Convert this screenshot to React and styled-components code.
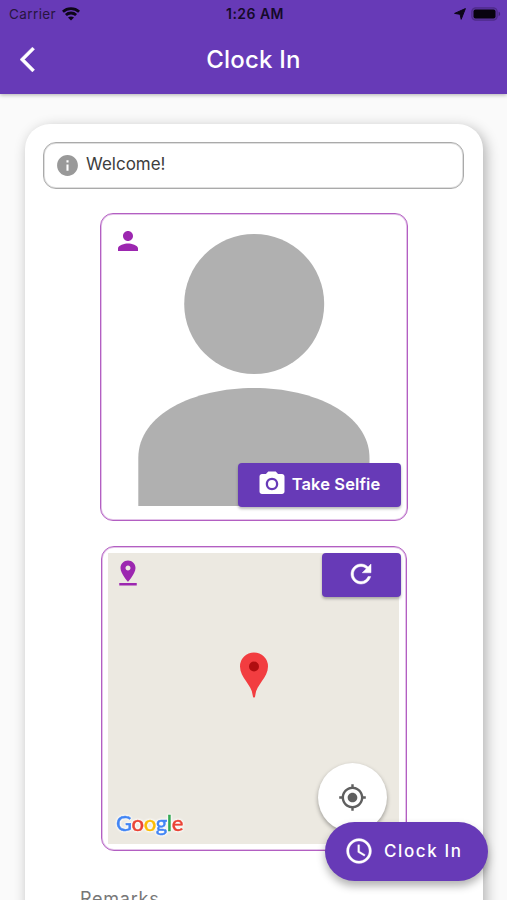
import React from "react";
import styled, { createGlobalStyle } from "styled-components";

const purple = "#673ab7";
const accent = "#9c27b0";

const GlobalStyle = createGlobalStyle`
  * { box-sizing: border-box; }
  html, body { margin: 0; padding: 0; overflow: hidden; background: #fafafa; }
  body { font-family: Inter, Roboto, "Liberation Sans", sans-serif; }
  svg { display: block; flex: none; }
`;

const Screen = styled.div`
  position: relative;
  width: 507px;
  height: 900px;
  overflow: hidden;
  display: flex;
  flex-direction: column;
  background: #fafafa;
`;

const Header = styled.header`
  flex: none;
  height: 94px;
  background: ${purple};
  box-shadow: 0 1px 4px rgba(0, 0, 0, 0.3);
`;

const StatusBar = styled.div`
  display: grid;
  grid-template-columns: 1fr auto 1fr;
  align-items: center;
  height: 27px;
  padding: 0 6px 0 9px;
  color: #150a2a;
  font-size: 13.5px;
`;

const StatusGroup = styled.div`
  display: flex;
  align-items: center;
  gap: ${(p) => p.$gap}px;
  justify-content: ${(p) => (p.$end ? "flex-end" : "flex-start")};
`;

const Carrier = styled.span`
  letter-spacing: 0.4px;
  color: #28153f;
`;

const Time = styled.span`
  font-weight: 600;
  font-size: 14px;
  letter-spacing: 0.45px;
`;

const TitleBar = styled.div`
  display: grid;
  grid-template-columns: 60px 1fr 60px;
  align-items: center;
  height: 65px;
`;

const BackButton = styled.button`
  display: flex;
  padding: 0 0 0 20px;
  border: 0;
  background: none;
  color: #fff;
`;

const Title = styled.h1`
  margin: 0;
  text-align: center;
  font-size: 24px;
  font-weight: 500;
  letter-spacing: 0.2px;
  color: #fff;
`;

const Card = styled.main`
  flex: none;
  display: flex;
  flex-direction: column;
  align-items: center;
  width: 458px;
  height: 900px;
  margin: 30px 0 0 25px;
  padding-top: 18px;
  border-radius: 25px;
  background: #fff;
  box-shadow: 3px 4px 14px rgba(0, 0, 0, 0.3);
`;

const Notice = styled.div`
  display: flex;
  align-items: center;
  gap: 6px;
  width: 421px;
  height: 47px;
  margin-right: 1px;
  padding-left: 11px;
  border: 1px solid #aaa;
  border-radius: 13px;
  box-shadow: inset 0 0 0 1px rgba(150, 150, 150, 0.3);
  color: #999;
`;

const NoticeText = styled.span`
  margin-top: -3px;
  font-size: 17px;
  letter-spacing: 0;
  color: #3d3d3d;
`;

const Frame = styled.section`
  display: grid;
  width: ${(p) => p.$width}px;
  height: ${(p) => p.$height}px;
  margin-top: ${(p) => p.$gap}px;
  padding: 6px;
  border: 1px solid #b35fc2;
  border-radius: 13px;
  box-shadow: inset 0 0 0 1px rgba(156, 39, 176, 0.28);
  color: ${accent};
  > * { grid-area: 1 / 1; }
`;

const Corner = styled.div`
  z-index: 1;
  align-self: start;
  justify-self: start;
  margin: ${(p) => p.$inset};
`;

const MapArea = styled.div`
  display: grid;
  place-items: center;
  margin-right: 1px;
  background: #ece9e1;
  > * { grid-area: 1 / 1; }
`;

const ActionButton = styled.button`
  z-index: 1;
  align-self: ${(p) => p.$align};
  justify-self: end;
  display: flex;
  align-items: center;
  justify-content: center;
  gap: 5px;
  width: ${(p) => p.$width}px;
  height: 44px;
  margin: ${(p) => p.$margin};
  padding: 0 2px 2px 0;
  border: 0;
  border-radius: 4px;
  background: ${purple};
  box-shadow: 0 2px 3px rgba(0, 0, 0, 0.28);
  color: #fff;
  font: 600 16.5px Inter, sans-serif;
  letter-spacing: 0.1px;
`;

const LocateButton = styled.button`
  place-self: end;
  display: grid;
  place-items: center;
  width: 69px;
  height: 69px;
  margin: 0 12px 12px 0;
  padding: 0;
  border: 0;
  border-radius: 50%;
  background: #fff;
  color: #5f5f5f;
  box-shadow: 0 2px 4px rgba(0, 0, 0, 0.35);
`;

const Brand = styled.div`
  place-self: end start;
  margin: 0 0 7px 8px;
  font: 500 22px/28px Lato, sans-serif;
  letter-spacing: -0.4px;
  filter: drop-shadow(0 0 1px #fff) drop-shadow(0 0 1px #fff);
`;

const Letter = styled.span`
  color: ${(p) => p.$color};
  -webkit-text-stroke: 0.4px ${(p) => p.$color};
`;

const MarkerSlot = styled.div`
  padding-bottom: 47px;
`;

const Remarks = styled.label`
  align-self: flex-start;
  margin: 36px 0 0 55px;
  font-size: 18px;
  line-height: 24px;
  letter-spacing: 0.75px;
  color: #777;
`;

const Fab = styled.button`
  position: absolute;
  right: 19px;
  bottom: 19px;
  z-index: 2;
  display: flex;
  align-items: center;
  gap: 10px;
  width: 163px;
  height: 59px;
  padding: 0 0 1px 19px;
  border: 0;
  border-radius: 30px;
  background: ${purple};
  box-shadow: 0 5px 9px rgba(0, 0, 0, 0.3);
  color: #fff;
  font: 500 17px Inter, sans-serif;
  letter-spacing: 1.6px;
`;

const paths = {
  info: "M12 2C6.48 2 2 6.48 2 12s4.48 10 10 10 10-4.48 10-10S17.52 2 12 2zm1 15h-2v-6h2v6zm0-8h-2V7h2v2z",
  person: "M12 12c2.21 0 4-1.79 4-4s-1.79-4-4-4-4 1.79-4 4 1.79 4 4 4zm0 2c-2.67 0-8 1.34-8 4v2h16v-2c0-2.66-5.33-4-8-4z",
  pinDrop: "M18 8c0-3.31-2.69-6-6-6S6 4.69 6 8c0 4.5 6 11 6 11s6-6.5 6-11zm-8 0c0-1.1.9-2 2-2s2 .9 2 2-.89 2-2 2c-1.1 0-2-.9-2-2zM5 20v2h14v-2H5z",
  camera: "M12 8.8a3.2 3.2 0 1 0 0 6.4 3.2 3.2 0 0 0 0-6.4zM9 2L7.17 4H4c-1.1 0-2 .9-2 2v12c0 1.1.9 2 2 2h16c1.1 0 2-.9 2-2V6c0-1.1-.9-2-2-2h-3.17L15 2H9zm3 15c-2.76 0-5-2.24-5-5s2.24-5 5-5 5 2.24 5 5-2.24 5-5 5z",
  refresh: "M17.65 6.35C16.2 4.9 14.21 4 12 4c-4.42 0-7.99 3.58-7.99 8s3.57 8 7.99 8c3.73 0 6.84-2.55 7.73-6h-2.08c-.82 2.33-3.04 4-5.65 4-3.31 0-6-2.69-6-6s2.69-6 6-6c1.66 0 3.14.69 4.22 1.78L13 11h7V4l-2.35 2.35z",
  locate: "M12 8c-2.21 0-4 1.79-4 4s1.79 4 4 4 4-1.79 4-4-1.79-4-4-4zm8.94 3c-.46-4.17-3.77-7.48-7.94-7.94V1h-2v2.06C6.83 3.52 3.52 6.83 3.06 11H1v2h2.06c.46 4.17 3.77 7.48 7.94 7.94V23h2v-2.06c4.17-.46 7.48-3.77 7.94-7.94H23v-2h-2.06zM12 19c-3.87 0-7-3.13-7-7s3.13-7 7-7 7 3.13 7 7-3.13 7-7 7z",
  clock: "M11.99 2C6.47 2 2 6.48 2 12s4.47 10 9.99 10C17.52 22 22 17.52 22 12S17.52 2 11.99 2zM12 20c-4.42 0-8-3.58-8-8s3.58-8 8-8 8 3.58 8 8-3.58 8-8 8zm.5-13H11v6l5.25 3.15.75-1.23-4.5-2.67z",
};

const strokes = { refresh: 0.4, clock: 0.2 };

function Icon({ name, size = 30 }) {
  return (
    <svg
      width={size}
      height={size}
      viewBox="0 0 24 24"
      fill="currentColor"
      stroke="currentColor"
      strokeWidth={strokes[name] || 0}
      aria-hidden="true"
    >
      <path d={paths[name]} />
    </svg>
  );
}

const BackIcon = () => (
  <svg width="15" height="25" viewBox="0 2 12 20" fill="#fff" stroke="#fff" strokeWidth=".4">
    <path d="M11.67 3.87 9.9 2.1 0 12l9.9 9.9 1.77-1.77L3.54 12z" />
  </svg>
);

const WifiIcon = () => (
  <svg width="18" height="14" viewBox="0 0 18 14" fill="none" stroke="#0d0618" strokeWidth="2.8">
    <path d="M.9 4.7C5.4.5 12.6.5 17.1 4.7" />
    <path d="M3.9 8c2.9-2.7 7.3-2.7 10.2 0" />
    <path d="M9 13.5 6 10.6c1.7-1.5 4.3-1.5 6 0z" fill="#0d0618" stroke="none" />
  </svg>
);

const LocationArrow = () => (
  <svg width="12" height="12" viewBox="0 0 12 12" fill="#0d0618">
    <path d="M11.4.6 7.2 11.3 6.1 6.3.6 5.4z" stroke="#0d0618" strokeWidth="1" strokeLinejoin="round" />
  </svg>
);

const BatteryIcon = () => (
  <svg width="30" height="14" viewBox="0 0 30 14">
    <rect x=".8" y=".8" width="25.4" height="12.4" rx="4" fill="#5d35a2" stroke="#4e2b8b" strokeWidth="1.2" />
    <rect x="2.5" y="2.5" width="22" height="9" rx="2" fill="#08030f" />
    <path d="M27.6 4.8c2 .5 2 3.9 0 4.4z" fill="#44267a" />
  </svg>
);

const Silhouette = () => (
  <svg width="294" height="294" viewBox="107 220 294 294" fill="#b0b0b0">
    <circle cx="254.2" cy="304" r="70" />
    <path d="M138.3 506V458C138.3 414 194 388 254 388S369.5 414 369.5 458V506z" />
  </svg>
);

const Marker = () => (
  <svg width="30" height="46" viewBox="0 0 30 46">
    <path d="M15 45.5c-.9 0-1.1-.7-1.3-2.3C12.7 32.5 1 25.8 1 14.5a14 14 0 0 1 28 0C29 25.8 17.3 32.5 16.3 43.2c-.2 1.6-.4 2.3-1.3 2.3z" fill="#f23d40" />
    <circle cx="15" cy="14.5" r="5" fill="#b00d10" />
  </svg>
);

const brandLetters = [
  ["G", "#4285f4"],
  ["o", "#ea4335"],
  ["o", "#fbbc05"],
  ["g", "#4285f4"],
  ["l", "#34a853"],
  ["e", "#ea4335"],
];

export default function App() {
  return (
    <Screen>
      <GlobalStyle />
      <Header>
        <StatusBar>
          <StatusGroup $gap={6}>
            <Carrier>Carrier</Carrier>
            <WifiIcon />
          </StatusGroup>
          <Time>1:26 AM</Time>
          <StatusGroup $gap={5} $end>
            <LocationArrow />
            <BatteryIcon />
          </StatusGroup>
        </StatusBar>
        <TitleBar>
          <BackButton aria-label="Back">
            <BackIcon />
          </BackButton>
          <Title>Clock In</Title>
        </TitleBar>
      </Header>

      <Card>
        <Notice>
          <Icon name="info" size={25} />
          <NoticeText>Welcome!</NoticeText>
        </Notice>

        <Frame $width={308} $height={308} $gap={24}>
          <Silhouette />
          <Corner $inset="6px 0 0 6px">
            <Icon name="person" />
          </Corner>
          <ActionButton $align="end" $width={163} $margin="0 0 7px 0">
            <Icon name="camera" />
            Take Selfie
          </ActionButton>
        </Frame>

        <Frame $width={306} $height={305} $gap={25}>
          <MapArea>
            <MarkerSlot>
              <Marker />
            </MarkerSlot>
            <Brand>
              {brandLetters.map(([char, color], i) => (
                <Letter key={i} $color={color}>{char}</Letter>
              ))}
            </Brand>
            <LocateButton aria-label="My location">
              <Icon name="locate" size={29} />
            </LocateButton>
          </MapArea>
          <Corner $inset="5px 0 0 5px">
            <Icon name="pinDrop" />
          </Corner>
          <ActionButton $align="start" $width={79} $margin="0 -1px 0 0" aria-label="Refresh">
            <Icon name="refresh" />
          </ActionButton>
        </Frame>

        <Remarks>Remarks</Remarks>
      </Card>

      <Fab>
        <Icon name="clock" />
        Clock In
      </Fab>
    </Screen>
  );
}
